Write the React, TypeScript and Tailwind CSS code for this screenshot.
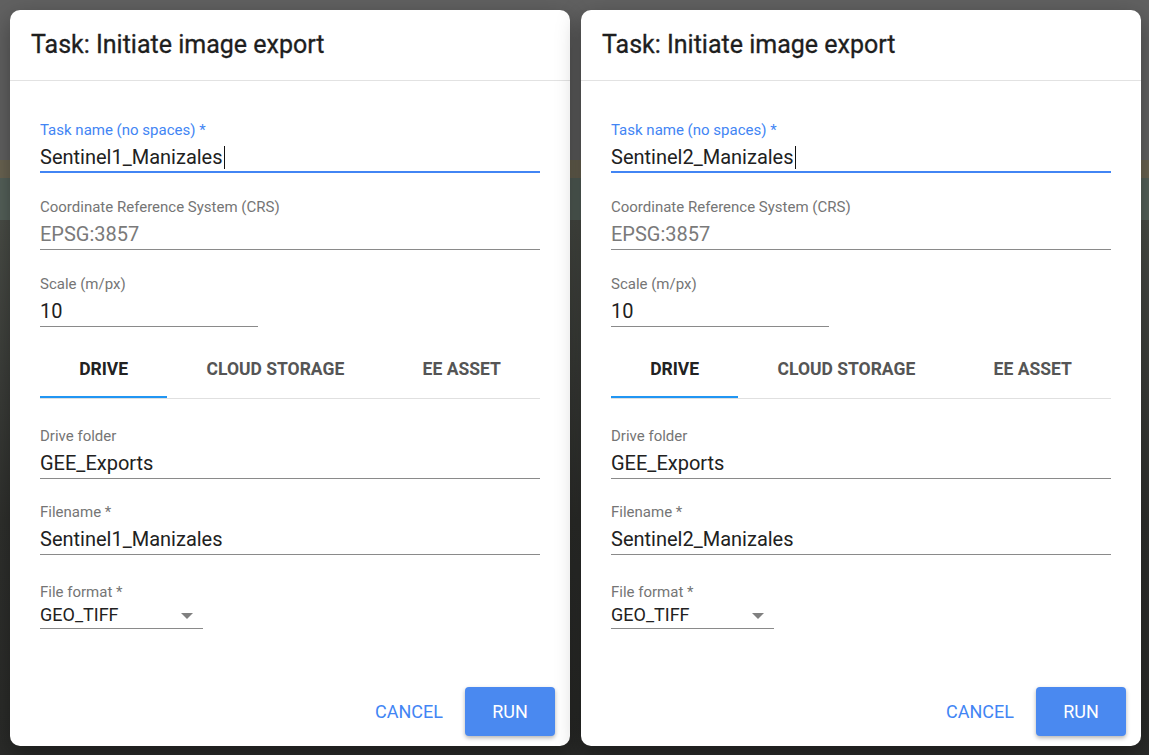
import React from "react";

type FieldProps = {
  label: string;
  value: string;
  focused?: boolean;
  disabled?: boolean;
  wrapClass?: string;
  cursor?: boolean;
};

function Field({ label, value, focused, disabled, wrapClass = "", cursor }: FieldProps) {
  return (
    <div className={`flex flex-col ${wrapClass}`}>
      <div
        className={`h-[18px] text-[15px] leading-[18px] whitespace-nowrap ${
          focused ? "text-[#4285f4]" : "text-[#757575]"
        }`}
      >
        {label}
      </div>
      <div
        className={`mt-[6px] ${focused ? "pb-[2px] border-b-2 border-[#4285f4]" : "pb-[3px] border-b border-[#8a8a8a]"}`}
      >
        <div
          className={`h-[24px] text-[20px] leading-[24px] flex items-center ${
            disabled ? "text-[#7a7a7a]" : "text-[#212121]"
          }`}
        >
          <span>{value}</span>
          {cursor && <span className="ml-[1px] inline-block w-px h-[23px] bg-[#111]" />}
        </div>
      </div>
    </div>
  );
}

function Dialog({ name }: { name: string }) {
  return (
    <div className="w-[560px] h-[736px] bg-white rounded-[10px] flex flex-col shadow-[0_8px_24px_rgba(0,0,0,0.35)]">
      <div className="h-[71px] flex items-center px-[21px] border-b border-[#e2e2e2]">
        <h2 className="text-[25px] font-normal text-[#1e1e1e] [-webkit-text-stroke:0.3px_#1e1e1e]">
          Task: Initiate image export
        </h2>
      </div>
      <div className="flex-1 flex flex-col px-[30px] pt-[40px]">
        <Field label="Task name (no spaces) *" value={name} focused cursor />
        <Field
          label="Coordinate Reference System (CRS)"
          value="EPSG:3857"
          disabled
          wrapClass="mt-[25px]"
        />
        <Field label="Scale (m/px)" value="10" wrapClass="mt-[25px] w-[218px]" />
        <div className="mt-[22px] flex border-b border-[#e0e0e0]">
          <div className="flex-auto h-[49px] pb-[7px] flex items-center justify-center border-b-2 border-[#2196f3] text-[17.5px] font-bold text-[#222]">
            DRIVE
          </div>
          <div className="flex-auto h-[49px] pb-[7px] flex items-center justify-center border-b-2 border-transparent text-[17.5px] font-bold text-[#555]">
            CLOUD STORAGE
          </div>
          <div className="flex-auto h-[49px] pb-[7px] flex items-center justify-center border-b-2 border-transparent text-[17.5px] font-bold text-[#555]">
            EE ASSET
          </div>
        </div>
        <Field label="Drive folder" value="GEE_Exports" wrapClass="mt-[28px]" />
        <Field label="Filename *" value={name} wrapClass="mt-[24px]" />
        <div className="mt-[28px] w-[163px] flex flex-col">
          <div className="h-[18px] text-[15px] leading-[18px] text-[#757575]">File format *</div>
          <div className="mt-[2px] pb-[1px] border-b border-[#8a8a8a] flex items-center justify-between">
            <span className="h-[24px] text-[18px] leading-[24px] text-[#212121]">GEO_TIFF</span>
            <svg width="12" height="6" viewBox="0 0 12 6" className="mr-[10px] mt-[2px]">
              <polygon points="0,0 12,0 6,6" fill="#808080" />
            </svg>
          </div>
        </div>
      </div>
      <div className="flex justify-end items-center pr-[15px] pb-[10px] gap-[12px]">
        <button className="h-[49px] pl-[10px] pr-[10px] text-[18px] text-[#4285f4] uppercase">Cancel</button>
        <button className="w-[90px] h-[49px] rounded-[4px] bg-[#4a89f0] text-white text-[18px] uppercase shadow-[0_2px_4px_rgba(0,0,0,0.3)]">
          Run
        </button>
      </div>
    </div>
  );
}

export default function App() {
  return (
    <div
      className="w-[1149px] h-[755px] overflow-hidden flex gap-[11px] pt-[10px] pl-[10px] bg-[linear-gradient(to_bottom,#616161_0px,#616161_160px,#6a6452_160px,#6a6452_178px,#55615a_178px,#55615a_220px,#4a4d47_220px,#3c3e3a_380px,#2f302d_520px,#2a2b29_755px)]"
      style={{ fontFamily: "Roboto, 'Liberation Sans', Arial, sans-serif" }}
    >
      <Dialog name="Sentinel1_Manizales" />
      <Dialog name="Sentinel2_Manizales" />
    </div>
  );
}
